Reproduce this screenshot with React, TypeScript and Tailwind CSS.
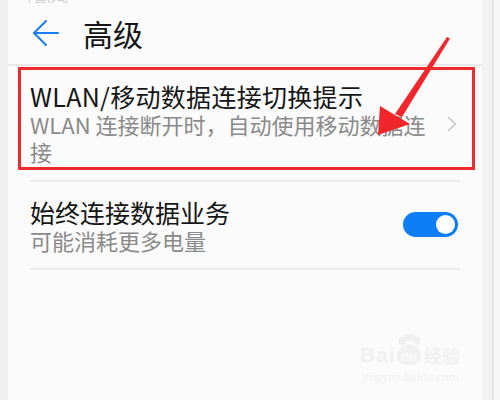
import React from "react";

const cjk = "font-['Noto_Sans_CJK_SC','Noto_Sans',sans-serif]";

const BackArrow = () => (
  <svg width="26" height="26" viewBox="0 0 26 26" fill="none" stroke="#1a7ef2" strokeWidth="2" strokeLinecap="round" strokeLinejoin="round">
    <path d="M25 13H1" />
    <path d="M13 1L1 13l12 12" />
  </svg>
);

const Chevron = () => (
  <svg width="10" height="16" viewBox="0 0 10 16" fill="none" stroke="#c4c4c4" strokeWidth="1.6" strokeLinecap="round" strokeLinejoin="round">
    <path d="M1.5 1.5L8.5 8l-7 6.5" />
  </svg>
);

const Toggle = () => (
  <div className="w-[55px] h-[25px] rounded-full bg-[#0d7ef5] flex items-center justify-end pr-[3px]">
    <div className="w-[19px] h-[19px] rounded-full bg-white" />
  </div>
);

// red annotation arrow drawn over the screenshot
const Annotation = () => (
  <svg className="absolute inset-0 pointer-events-none" width="500" height="400" viewBox="0 0 500 400">
    <polygon points="447,37 450,38.5 402,117 395,114" fill="#f0262a" />
    <polygon points="378,135 380,106 410,124" fill="#f0262a" />
  </svg>
);

const Watermark = () => (
  <div className="absolute left-[360px] top-[334px] flex flex-col items-start text-[#f0f0f0] select-none">
    <div className="flex items-end">
      <span className="font-['Liberation_Sans',sans-serif] font-bold text-[21px] leading-[22px] tracking-[1px]">Bai</span>
      <div className="relative w-[26px] h-[32px] flex items-end justify-center">
        <svg className="absolute top-0 left-0" width="26" height="32" viewBox="0 0 26 32" fill="#f1f1f1" stroke="#e8e8e8" strokeWidth="0.8">
          <ellipse cx="6" cy="7" rx="3" ry="3.5" />
          <ellipse cx="11" cy="3.5" rx="3" ry="3.2" />
          <ellipse cx="16.5" cy="3.5" rx="3" ry="3.2" />
          <ellipse cx="21" cy="7" rx="3" ry="3.5" />
          <path d="M2 22c0-6 5-11 11-11s11 5 11 11-4 8-11 8-11-2-11-8z" />
        </svg>
        <span className="relative font-['Liberation_Sans',sans-serif] font-bold text-[13px] leading-[18px] text-[#fafafa]">du</span>
      </div>
      <span className={`${cjk} font-bold text-[18px] leading-[22px] ml-[2px]`}>经验</span>
    </div>
    <span className="font-['Liberation_Serif',serif] text-[13px] leading-[16px] mt-[3px] ml-[2px] text-[#f0f0f0]">jingyan.baidu.com</span>
  </div>
);

export default function App() {
  return (
    <div className={`relative w-[500px] h-[400px] overflow-hidden flex bg-[#f6f6f6] ${cjk}`}>
      <div className="w-[8px] bg-[#f0f0f0]" />

      <div className="w-[474px] bg-[#fbfbfb] flex flex-col">
        {/* status bar, cut off at top */}
        <div className="h-[3px] overflow-hidden pl-[16px]">
          <div className="-mt-[9px] text-[11px] leading-[12px] text-[#c8c8c8]">中国移动</div>
        </div>

        {/* header */}
        <div className="h-[61px] flex items-center pl-[25px] pb-[2px]">
          <BackArrow />
          <span className="ml-[24px] text-[30px] leading-[36px] text-[#161616]">高级</span>
        </div>
        <div className="h-[2px] bg-[#e9e9e9]" />

        {/* highlighted item */}
        <div className="mt-[1px] ml-[10px] w-[457px] h-[103px] border-[3px] border-[#ef2a2e] flex items-start pl-[9px] pt-[11px]">
          <div className="w-[410px] flex flex-col">
            <span className="text-[25px] leading-[30px] tracking-[0.3px] text-[#161616] whitespace-nowrap">WLAN/移动数据连接切换提示</span>
            <span className="text-[22px] leading-[27px] text-[#8a8a8a]">WLAN 连接断开时，自动使用移动数据连接</span>
          </div>
          <div className="ml-[7px] mt-[35px]">
            <Chevron />
          </div>
        </div>

        <div className="mt-[10px] ml-[22px] w-[430px] h-[2px] bg-[#ececec]" />

        {/* data service item */}
        <div className="ml-[22px] w-[430px] flex items-center justify-between pt-[15px] pb-[14px]">
          <div className="flex flex-col">
            <span className="text-[25px] leading-[30px] text-[#161616]">始终连接数据业务</span>
            <span className="text-[22px] leading-[27px] text-[#8a8a8a]">可能消耗更多电量</span>
          </div>
          <div className="mr-[2px] -mt-[2px]">
            <Toggle />
          </div>
        </div>
        <div className="ml-[22px] w-[430px] h-[2px] bg-[#ececec]" />
      </div>

      <div className="w-[10px] bg-[#f2f2f2]" />
      <div className="w-[2px] bg-[#e2e2e2]" />
      <div className="flex-1 bg-[#f6f6f6]" />

      <Annotation />
      <Watermark />
    </div>
  );
}
